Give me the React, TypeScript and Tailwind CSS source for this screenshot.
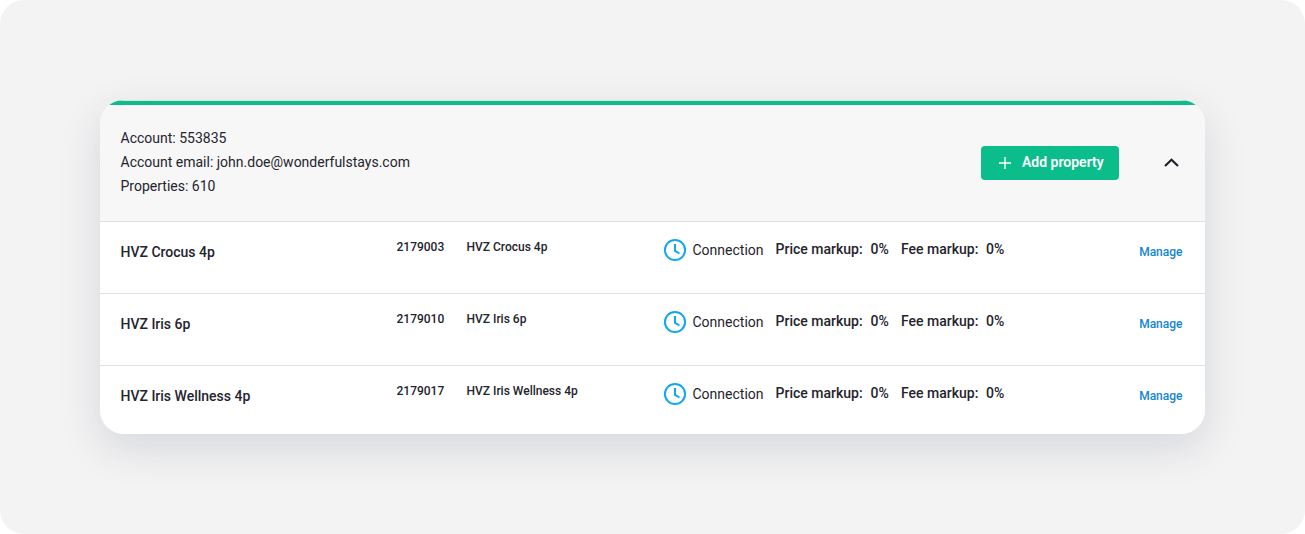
import { useState } from 'react';

interface Property {
  id: string;
  name: string;
  priceMarkup: number;
  feeMarkup: number;
}

const properties: Property[] = [
  { id: '2179003', name: 'HVZ Crocus 4p', priceMarkup: 0, feeMarkup: 0 },
  { id: '2179010', name: 'HVZ Iris 6p', priceMarkup: 0, feeMarkup: 0 },
  { id: '2179017', name: 'HVZ Iris Wellness 4p', priceMarkup: 0, feeMarkup: 0 },
];

function ClockIcon() {
  return (
    <svg className="w-6 h-6 shrink-0" viewBox="0 0 24 24" fill="none" stroke="#12a7ee" strokeWidth="2">
      <circle cx="12" cy="12" r="10.1" />
      <path d="M12 6v7l4.4 2.4" />
    </svg>
  );
}

function PropertyRow({ property }: { property: Property }) {
  return (
    <div className="flex items-start h-[72px] border-t border-[#e0e0e0] pl-[20.5px] pr-[22.5px] font-medium">
      <div className="w-[276px] pt-[18px] text-sm leading-6">{property.name}</div>
      <div className="w-[70px] pt-[15px] text-xs leading-5">{property.id}</div>
      <div className="w-[196.5px] pt-[15px] text-xs leading-5">{property.name}</div>
      <div className="flex items-center w-[112.5px] pt-4 gap-[5.5px] text-sm leading-6 font-normal">
        <ClockIcon />
        Connection
      </div>
      <div className="flex pt-[15px] text-sm leading-6">
        <span className="w-[95px]">Price markup:</span>
        <span className="w-[30.5px]">{property.priceMarkup}%</span>
        <span className="w-[85px]">Fee markup:</span>
        <span>{property.feeMarkup}%</span>
      </div>
      <button className="ml-auto mt-5 text-xs leading-5 text-[#1385d6]">Manage</button>
    </div>
  );
}

export default function App() {
  const [isOpen, setIsOpen] = useState(true);

  return (
    <div className="w-[1305px] h-[534px] bg-white font-[Roboto,sans-serif] text-[#24242e]">
      <div className="h-full rounded-[24px] bg-[#f3f3f3] px-[100px] pt-[100px]">
        <div className="rounded-[24px] shadow-[0_14px_42px_rgba(40,50,95,0.14)]">
          <div className="rounded-[24px] overflow-hidden bg-white">
            <div className="h-[5px] border-t border-[#dcdee0] bg-[#0bbd8b]" />
            <div className="flex items-center h-[116px] bg-[#f7f7f7] pl-[20.5px] pr-[26.5px] pb-[2px]">
              <div className="text-sm leading-6">
                <p>Account: 553835</p>
                <p>Account email: john.doe@wonderfulstays.com</p>
                <p>Properties: 610</p>
              </div>
              <button className="ml-auto mt-[2px] flex items-center w-[138px] h-[34px] rounded bg-[#0bbd8b] pl-[18px] text-sm font-semibold text-white">
                <svg className="w-3 h-3 mr-[11px]" viewBox="0 0 12 12" stroke="currentColor" strokeWidth="1.4">
                  <path d="M6 0v12M0 6h12" />
                </svg>
                <span className="pb-[2px]">Add property</span>
              </button>
              <button className="ml-[44.5px] mt-px" onClick={() => setIsOpen(!isOpen)}>
                <svg
                  className={isOpen ? 'w-[15px] h-[9px]' : 'w-[15px] h-[9px] rotate-180'}
                  viewBox="0 0 15 9"
                  fill="none"
                  stroke="#24202e"
                  strokeWidth="2.2"
                >
                  <path d="M1 8l6.5-6.3L14 8" />
                </svg>
              </button>
            </div>
            {isOpen && (
              <div className="h-[213px]">
                {properties.map((property) => (
                  <PropertyRow key={property.id} property={property} />
                ))}
              </div>
            )}
          </div>
        </div>
      </div>
    </div>
  );
}
